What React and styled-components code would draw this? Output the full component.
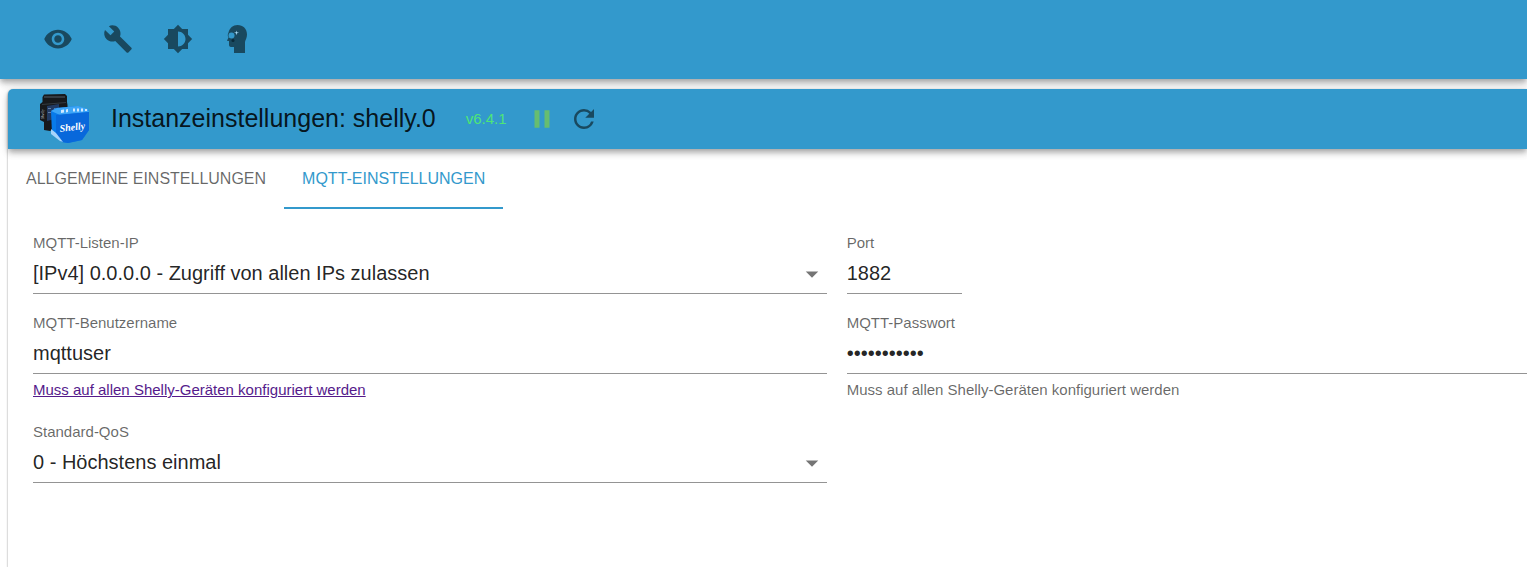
import React, { useState } from 'react';
import styled, { createGlobalStyle } from 'styled-components';
import {
  MdArrowDropDown,
  MdBrightness6,
  MdBuild,
  MdPause,
  MdRefresh,
  MdVisibility,
} from 'react-icons/md';

const GlobalStyle = createGlobalStyle`
  * {
    box-sizing: border-box;
  }
  body {
    margin: 0;
    background: #fff;
    color: rgba(0, 0, 0, 0.87);
    font-family: 'Liberation Sans', Arial, sans-serif;
  }
  button, input, select {
    font-family: inherit;
  }
`;

const Page = styled.div`
  display: flex;
  flex-direction: column;
  min-height: 100vh;
  overflow: hidden;
`;

const elevation = `
  box-shadow: 0 3px 5px -1px rgba(0, 0, 0, 0.2), 0 5px 6px rgba(0, 0, 0, 0.14),
    0 1px 12px rgba(0, 0, 0, 0.12);
`;

const Toolbar = styled.header`
  display: flex;
  align-items: center;
  height: 79px;
  padding: 0 28px 1px;
  background: #3399cc;
  ${elevation}
`;

const IconButton = styled.button`
  display: flex;
  align-items: center;
  justify-content: center;
  width: ${(props) => (props.$small ? '42px' : '60px')};
  height: ${(props) => (props.$small ? '42px' : '60px')};
  padding: 0;
  border: none;
  border-radius: 50%;
  background: none;
  font-size: 30px;
  color: ${(props) => props.$color || '#19495f'};
  cursor: pointer;
`;

const Panel = styled.main`
  flex: 1;
  margin: 10px 0 0 8px;
  border-radius: 5px 0 0 0;
  box-shadow: 0 1px 2px rgba(0, 0, 0, 0.5);
`;

const PanelHeader = styled.div`
  display: flex;
  align-items: center;
  height: 60px;
  padding-left: 30px;
  border-radius: 5px 0 0 0;
  background: #3399cc;
  ${elevation}
`;

const Title = styled.h1`
  margin: 0 30px 0 22px;
  padding-bottom: 3px;
  font-size: 25px;
  font-weight: 400;
  line-height: 32px;
  white-space: nowrap;
`;

const Version = styled.span`
  margin-right: 14px;
  font-size: 15px;
  line-height: 20px;
  color: #4ee577;
`;

const Tabs = styled.nav`
  display: flex;
`;

const Tab = styled.button`
  height: 60px;
  padding: 2px 18px 0;
  border: none;
  border-bottom: 2px solid ${(props) => (props.$active ? '#3399cc' : 'transparent')};
  background: none;
  font-size: 16px;
  line-height: 20px;
  text-transform: uppercase;
  white-space: nowrap;
  color: ${(props) => (props.$active ? '#3399cc' : 'rgba(0, 0, 0, 0.6)')};
  cursor: pointer;
`;

const Form = styled.form`
  display: grid;
  grid-template-columns: minmax(0, 7fr) minmax(0, 6fr);
  align-items: start;
  gap: 19px 20px;
  padding: 24px 0 24px 25px;
`;

const FieldBox = styled.div`
  display: flex;
  flex-direction: column;
  width: ${(props) => (props.$narrow ? '115px' : 'auto')};
`;

const Label = styled.label`
  font-size: 15px;
  line-height: 20px;
  color: rgba(0, 0, 0, 0.6);
`;

const Control = styled.div`
  position: relative;
  display: flex;
  height: 41px;
  border-bottom: 1px solid #949494;

  input,
  select {
    flex: 1;
    min-width: 0;
    padding: 0;
    border: none;
    outline: none;
    appearance: none;
    background: none;
    font-size: 20px;
    color: rgba(0, 0, 0, 0.87);
  }

  svg {
    position: absolute;
    right: 0;
    top: 6px;
    font-size: 30px;
    color: rgba(0, 0, 0, 0.54);
    pointer-events: none;
  }
`;

const Helper = styled.p`
  margin: 3px 0 1px;
  font-size: 15px;
  line-height: 25px;
  color: rgba(0, 0, 0, 0.6);

  a {
    color: #551a8b;
  }
`;

function HeadIcon() {
  return (
    <svg width="30" height="30" viewBox="0 0 30 30" aria-hidden="true">
      <path
        fill="currentColor"
        d="M14.500 1C20 1 24 4.800 24 10.500C24 14 22.500 15.500 22 18V29H11V23H8C6.500 23 6 22 6 20.500V17H4.800C4.200 17 4 16.500 4.300 16L5.500 13.500C4.500 12 4.500 10.500 5.500 8.500C6.500 4 10 1 14.500 1Z"
      />
      <circle cx="8.500" cy="11.500" r="3" fill="#3399cc" />
      <path fill="#a5d8f3" d="M13.500 6.500l.5 1.800 2 .5-2 .5-.5 2-.5-2-2-.5 2-.5z" />
      <circle cx="10" cy="16.500" r="1.500" fill="#0a2a3a" />
    </svg>
  );
}

function ShellyLogo() {
  return (
    <svg width="51" height="50" viewBox="0 0 51 50" role="img" aria-label="Shelly">
      <path
        fill="#17191c"
        d="M6 0.500L27 0L29 2V8L29.500 11V29L12 37L6 36V28L2 26V10L4.500 8V3Z"
      />
      <path fill="#343b42" d="M6 2h21v2H6zM4 10l24-2v1L4 11z" />
      <path fill="#223b64" d="M9 12l12-2v14l-12 3z" />
      <path fill="#6480a5" d="M10 14h3v1h-3zm0 4h3v1h-3zm6-4h2v1h-2zm0 4h2v1h-2z" />
      <text
        x="-25"
        y="6"
        fill="#d5d8dd"
        fontFamily="Liberation Serif"
        fontSize="4"
        fontStyle="italic"
        transform="rotate(-90)"
      >
        Shelly
      </text>
      <path fill="#087bea" d="M13 17L18 14L40 12L51 16V36L44 46L30 49L24 48L14 40Z" />
      <path fill="#3ca5f7" d="M13 17L19 14L40 12L50 15L51 18L22 21Z" />
      <path fill="#0868db" d="M18 21L51 18V36L44 46L30 49L24 48L18 41Z" />
      <path fill="#a7d4fb" d="M13 35L18 39L25 48L22 47L13 40Z" />
      <path
        fill="#d1e9ff"
        d="M23 16l3-.5v3l-3 .5zm5-.5l2-.5v3l-2 .5zm7-1h2v3h-2zm4 0h2v3h-2zm4 0h2v3h-2zm4 .5h2v2h-2z"
      />
      <text
        x="22"
        y="38"
        fill="#fff"
        fontFamily="Liberation Serif"
        fontSize="10"
        fontStyle="italic"
        fontWeight="700"
        transform="rotate(-7 22 38)"
      >
        Shelly
      </text>
    </svg>
  );
}

function Field({ id, label, narrow, helper, children }) {
  return (
    <FieldBox $narrow={narrow}>
      <Label htmlFor={id}>{label}</Label>
      <Control>{children}</Control>
      {helper && <Helper>{helper}</Helper>}
    </FieldBox>
  );
}

const TABS = ['Allgemeine Einstellungen', 'MQTT-Einstellungen'];

function App() {
  const [activeTab, setActiveTab] = useState(1);
  const hint = 'Muss auf allen Shelly-Geräten konfiguriert werden';

  return (
    <Page>
      <GlobalStyle />
      <Toolbar>
        <IconButton type="button" aria-label="Sichtbarkeit">
          <MdVisibility />
        </IconButton>
        <IconButton type="button" aria-label="Werkzeuge">
          <MdBuild />
        </IconButton>
        <IconButton type="button" aria-label="Farbschema">
          <MdBrightness6 />
        </IconButton>
        <IconButton type="button" aria-label="Expertenmodus">
          <HeadIcon />
        </IconButton>
      </Toolbar>

      <Panel>
        <PanelHeader>
          <ShellyLogo />
          <Title>Instanzeinstellungen: shelly.0</Title>
          <Version>v6.4.1</Version>
          <IconButton type="button" $small $color="#67bd70" aria-label="Pause">
            <MdPause />
          </IconButton>
          <IconButton type="button" $small aria-label="Neu starten">
            <MdRefresh />
          </IconButton>
        </PanelHeader>

        <Tabs>
          {TABS.map((tab, index) => (
            <Tab
              key={tab}
              type="button"
              $active={index === activeTab}
              onClick={() => setActiveTab(index)}
            >
              {tab}
            </Tab>
          ))}
        </Tabs>

        <Form>
          <Field id="bind" label="MQTT-Listen-IP">
            <select id="bind">
              <option>[IPv4] 0.0.0.0 - Zugriff von allen IPs zulassen</option>
            </select>
            <MdArrowDropDown />
          </Field>
          <Field id="port" label="Port" narrow>
            <input id="port" type="text" inputMode="numeric" defaultValue="1882" />
          </Field>
          <Field id="user" label="MQTT-Benutzername" helper={<a href="#user">{hint}</a>}>
            <input id="user" type="text" defaultValue="mqttuser" />
          </Field>
          <Field id="password" label="MQTT-Passwort" helper={hint}>
            <input id="password" type="password" defaultValue="shellymqtt1" />
          </Field>
          <Field id="qos" label="Standard-QoS">
            <select id="qos">
              <option>0 - Höchstens einmal</option>
            </select>
            <MdArrowDropDown />
          </Field>
        </Form>
      </Panel>
    </Page>
  );
}

export default App;
